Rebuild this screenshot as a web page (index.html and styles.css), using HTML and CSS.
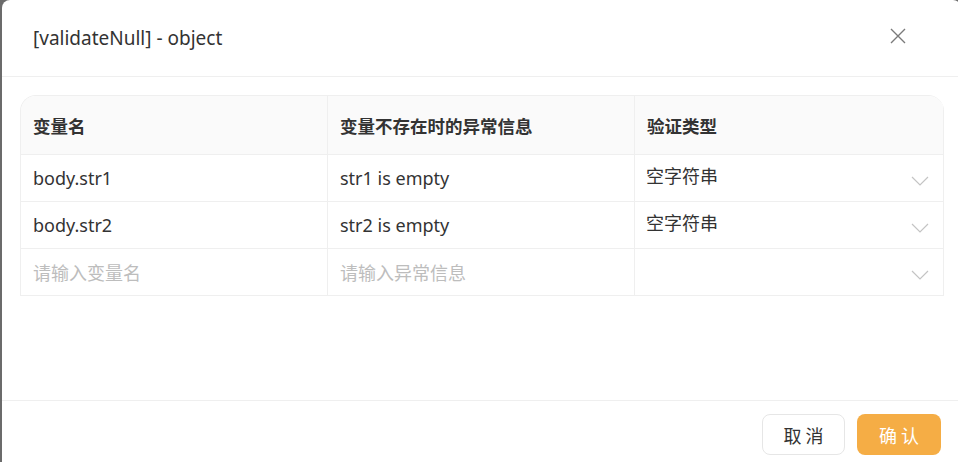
FILE: index.html
```html
<!DOCTYPE html>
<html lang="zh-CN">
<head>
<meta charset="utf-8">
<link rel="stylesheet" href="styles.css">
</head>
<body>
<div class="dialog">
  <div class="dlg-header">
    <div class="dlg-title">[validateNull] - object</div>
    <svg class="close" width="16" height="16" viewBox="0 0 16 16"><path d="M1 1L15 15M15 1L1 15" stroke="#7a7a7a" stroke-width="1.4" fill="none"/></svg>
  </div>
  <div class="dlg-body">
    <div class="grid">
      <div class="cell head">变量名</div>
      <div class="cell head">变量不存在时的异常信息</div>
      <div class="cell head last">验证类型</div>

      <div class="cell">body.str1</div>
      <div class="cell">str1 is empty</div>
      <div class="cell last sel"><span class="sel-text">空字符串</span><svg class="chev" width="18" height="10" viewBox="0 0 18 10"><path d="M1 1L9 9L17 1" stroke="#c4c4c4" stroke-width="1.2" fill="none"/></svg></div>

      <div class="cell">body.str2</div>
      <div class="cell">str2 is empty</div>
      <div class="cell last sel"><span class="sel-text">空字符串</span><svg class="chev" width="18" height="10" viewBox="0 0 18 10"><path d="M1 1L9 9L17 1" stroke="#c4c4c4" stroke-width="1.2" fill="none"/></svg></div>

      <div class="cell ph">请输入变量名</div>
      <div class="cell ph">请输入异常信息</div>
      <div class="cell last sel"><span class="sel-text"></span><svg class="chev" width="18" height="10" viewBox="0 0 18 10"><path d="M1 1L9 9L17 1" stroke="#c4c4c4" stroke-width="1.2" fill="none"/></svg></div>
    </div>
  </div>
  <div class="dlg-footer">
    <button class="btn cancel">取 消</button>
    <button class="btn ok">确 认</button>
  </div>
</div>
</body>
</html>
```
FILE: styles.css
```css
html, body {
  margin: 0;
  padding: 0;
  overflow: hidden;
}
body {
  background: #6b6b6b;
  width: 958px;
  height: 462px;
  font-family: "Noto Sans", "Noto Sans CJK SC", sans-serif;
  color: #333;
}
.dialog {
  margin-left: 2px;
  width: 959px;
  height: 480px;
  background: #fff;
  border-radius: 8px;
  display: flex;
  flex-direction: column;
}
.dlg-header {
  height: 76px;
  border-bottom: 1px solid #efefef;
  display: flex;
  align-items: center;
  justify-content: space-between;
  padding: 0 55px 0 31px;
  box-sizing: content-box;
}
.dlg-title {
  font-size: 19px;
  color: #333;
  margin-top: -1px;
}
.close {
  margin-top: -4px;
}
.dlg-body {
  height: 323px;
  padding: 18px 0 0 18px;
  box-sizing: border-box;
}
.grid {
  width: 924px;
  display: grid;
  grid-template-columns: 307px 307px 309px;
  border-top: 1px solid #efefef;
  border-left: 1px solid #efefef;
  border-radius: 16px 16px 0 0;
  overflow: hidden;
  box-sizing: border-box;
}
.cell {
  height: 47px;
  border-right: 1px solid #efefef;
  border-bottom: 1px solid #efefef;
  padding: 0 12px;
  display: flex;
  align-items: center;
  font-size: 18px;
  color: #333;
  box-sizing: border-box;
}
.cell.head {
  height: 59px;
  background: #fafafa;
  font-weight: bold;
  font-size: 17.5px;
  padding-top: 1px;
}
.cell.ph {
  color: #bdbdbd;
}
.cell.sel {
  justify-content: space-between;
  padding-right: 14px;
  padding-left: 11px;
}
.sel-text {
  margin-top: -6px;
}
.chev {
  margin-top: 6px;
}
.dlg-footer {
  border-top: 1px solid #efefef;
  display: flex;
  justify-content: flex-end;
  gap: 12px;
  padding: 13px 20px 0 0;
}
.btn {
  height: 41px;
  border-radius: 8px;
  font-family: "Noto Sans CJK SC", sans-serif;
  font-size: 18px;
  cursor: pointer;
}
.btn.cancel {
  width: 83px;
  background: #fff;
  border: 1px solid #e6e6e6;
  color: #333;
}
.btn.ok {
  width: 84px;
  background: #f5ad45;
  border: none;
  color: #fff;
}
```
